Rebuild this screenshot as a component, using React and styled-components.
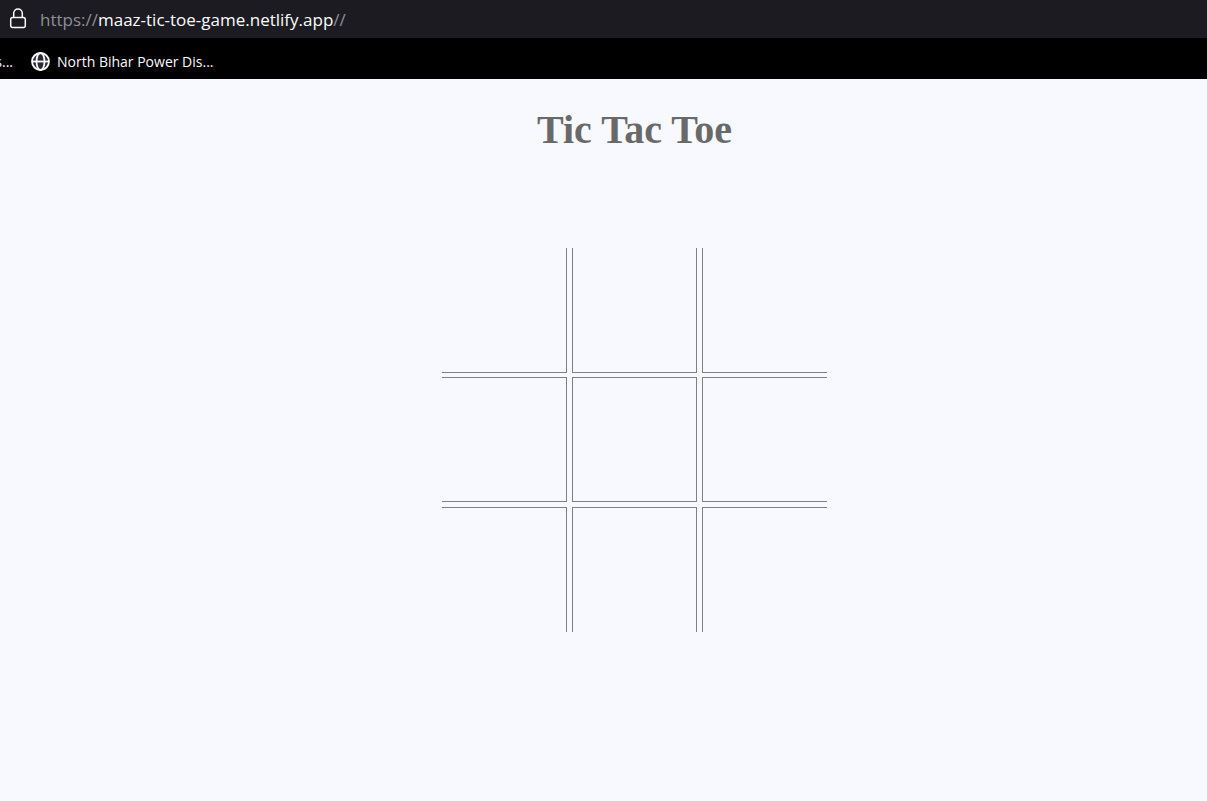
import React, { useState } from "react";
import styled, { createGlobalStyle } from "styled-components";

const GlobalStyle = createGlobalStyle`
  * { box-sizing: border-box; }
  body { margin: 0; background: #f8f9ff; }
`;

const Window = styled.div`
  min-height: 100vh;
  display: flex;
  flex-direction: column;
  background: #f8f9ff;
`;

const AddressBar = styled.header`
  display: flex;
  align-items: center;
  height: 38px;
  padding: 0 8px;
  gap: 12px;
  background: #1c1b22;
`;

const Address = styled.a`
  font: 17px/24px "Segoe UI", "Open Sans", sans-serif;
  white-space: nowrap;
  color: #8f8f94;
  text-decoration: none;
  padding-top: 1px;
`;

const Host = styled.span`
  color: #fbfbfe;
`;

const BookmarksBar = styled.nav`
  display: flex;
  align-items: center;
  gap: 18px;
  height: 41px;
  padding-top: 6px;
  background: #000;
`;

const Bookmark = styled.a`
  display: flex;
  align-items: center;
  justify-content: flex-end;
  gap: 7px;
  width: ${(p) => (p.$clipped ? "13px" : "auto")};
  overflow: hidden;
  white-space: nowrap;
  color: #fbfbfe;
  text-decoration: none;
  font: 14px/20px "Segoe UI", "Open Sans", sans-serif;
`;

const Icon = styled.svg`
  display: block;
  flex: none;
`;

const Game = styled.main`
  flex: 1;
  display: flex;
  flex-direction: column;
  align-items: center;
  padding: 27px 0 40px 62px;
`;

const Title = styled.h1`
  margin: 0 0 94px;
  font: bold 40px/48px "Liberation Serif", "Times New Roman", serif;
  color: #696969;
`;

const Board = styled.div`
  display: grid;
  grid-template-columns: repeat(3, 125px);
  grid-template-rows: 125px 125px 126px;
  gap: 4px 5px;
  align-items: end;
`;

const line = "1px solid #808080";

const Cell = styled.button`
  height: 125px;
  margin: 0;
  padding: 0;
  background: transparent;
  color: #696969;
  font: bold 80px/120px "Liberation Serif", "Times New Roman", serif;
  border: 0;
  border-top: ${(p) => (p.$row > 0 ? line : "0")};
  border-bottom: ${(p) => (p.$row < 2 ? line : "0")};
  border-left: ${(p) => (p.$col > 0 ? line : "0")};
  border-right: ${(p) => (p.$col < 2 ? line : "0")};
  cursor: pointer;
`;

const LockIcon = () => (
  <Icon width="20" height="24" viewBox="0 0 20 24" fill="none" stroke="#fbfbfe" strokeWidth="1.5" aria-hidden="true">
    <rect x="2.7" y="10.5" width="14.6" height="9.9" rx="2" />
    <path d="M5.7 10.5V6.2a4.3 4.3 0 0 1 8.6 0v4.3" />
  </Icon>
);

const GlobeIcon = () => (
  <Icon width="19" height="19" viewBox="0 0 19 19" fill="none" stroke="#fbfbfe" strokeWidth="1.8" aria-hidden="true">
    <circle cx="9.5" cy="9.5" r="8.5" fill="#2b2a33" />
    <ellipse cx="9.5" cy="9.5" rx="4" ry="8.5" />
    <path d="M1 9.5h17" />
  </Icon>
);

export default function App() {
  const [marks, setMarks] = useState(Array(9).fill(""));

  const play = (index) => {
    if (marks[index]) return;
    const mark = marks.filter(Boolean).length % 2 ? "O" : "X";
    setMarks(marks.map((m, i) => (i === index ? mark : m)));
  };

  return (
    <>
      <GlobalStyle />
      <Window>
        <AddressBar>
          <LockIcon />
          <Address href="#">
            https://<Host>maaz-tic-toe-game.netlify.app</Host>//
          </Address>
        </AddressBar>
        <BookmarksBar aria-label="Bookmarks">
          <Bookmark href="#" $clipped>s...</Bookmark>
          <Bookmark href="#">
            <GlobeIcon />
            North Bihar Power Dis...
          </Bookmark>
        </BookmarksBar>
        <Game>
          <Title>Tic Tac Toe</Title>
          <Board>
            {marks.map((mark, i) => (
              <Cell
                key={i}
                type="button"
                aria-label={`Row ${Math.floor(i / 3) + 1}, column ${(i % 3) + 1}`}
                $row={Math.floor(i / 3)}
                $col={i % 3}
                onClick={() => play(i)}
              >
                {mark}
              </Cell>
            ))}
          </Board>
        </Game>
      </Window>
    </>
  );
}
